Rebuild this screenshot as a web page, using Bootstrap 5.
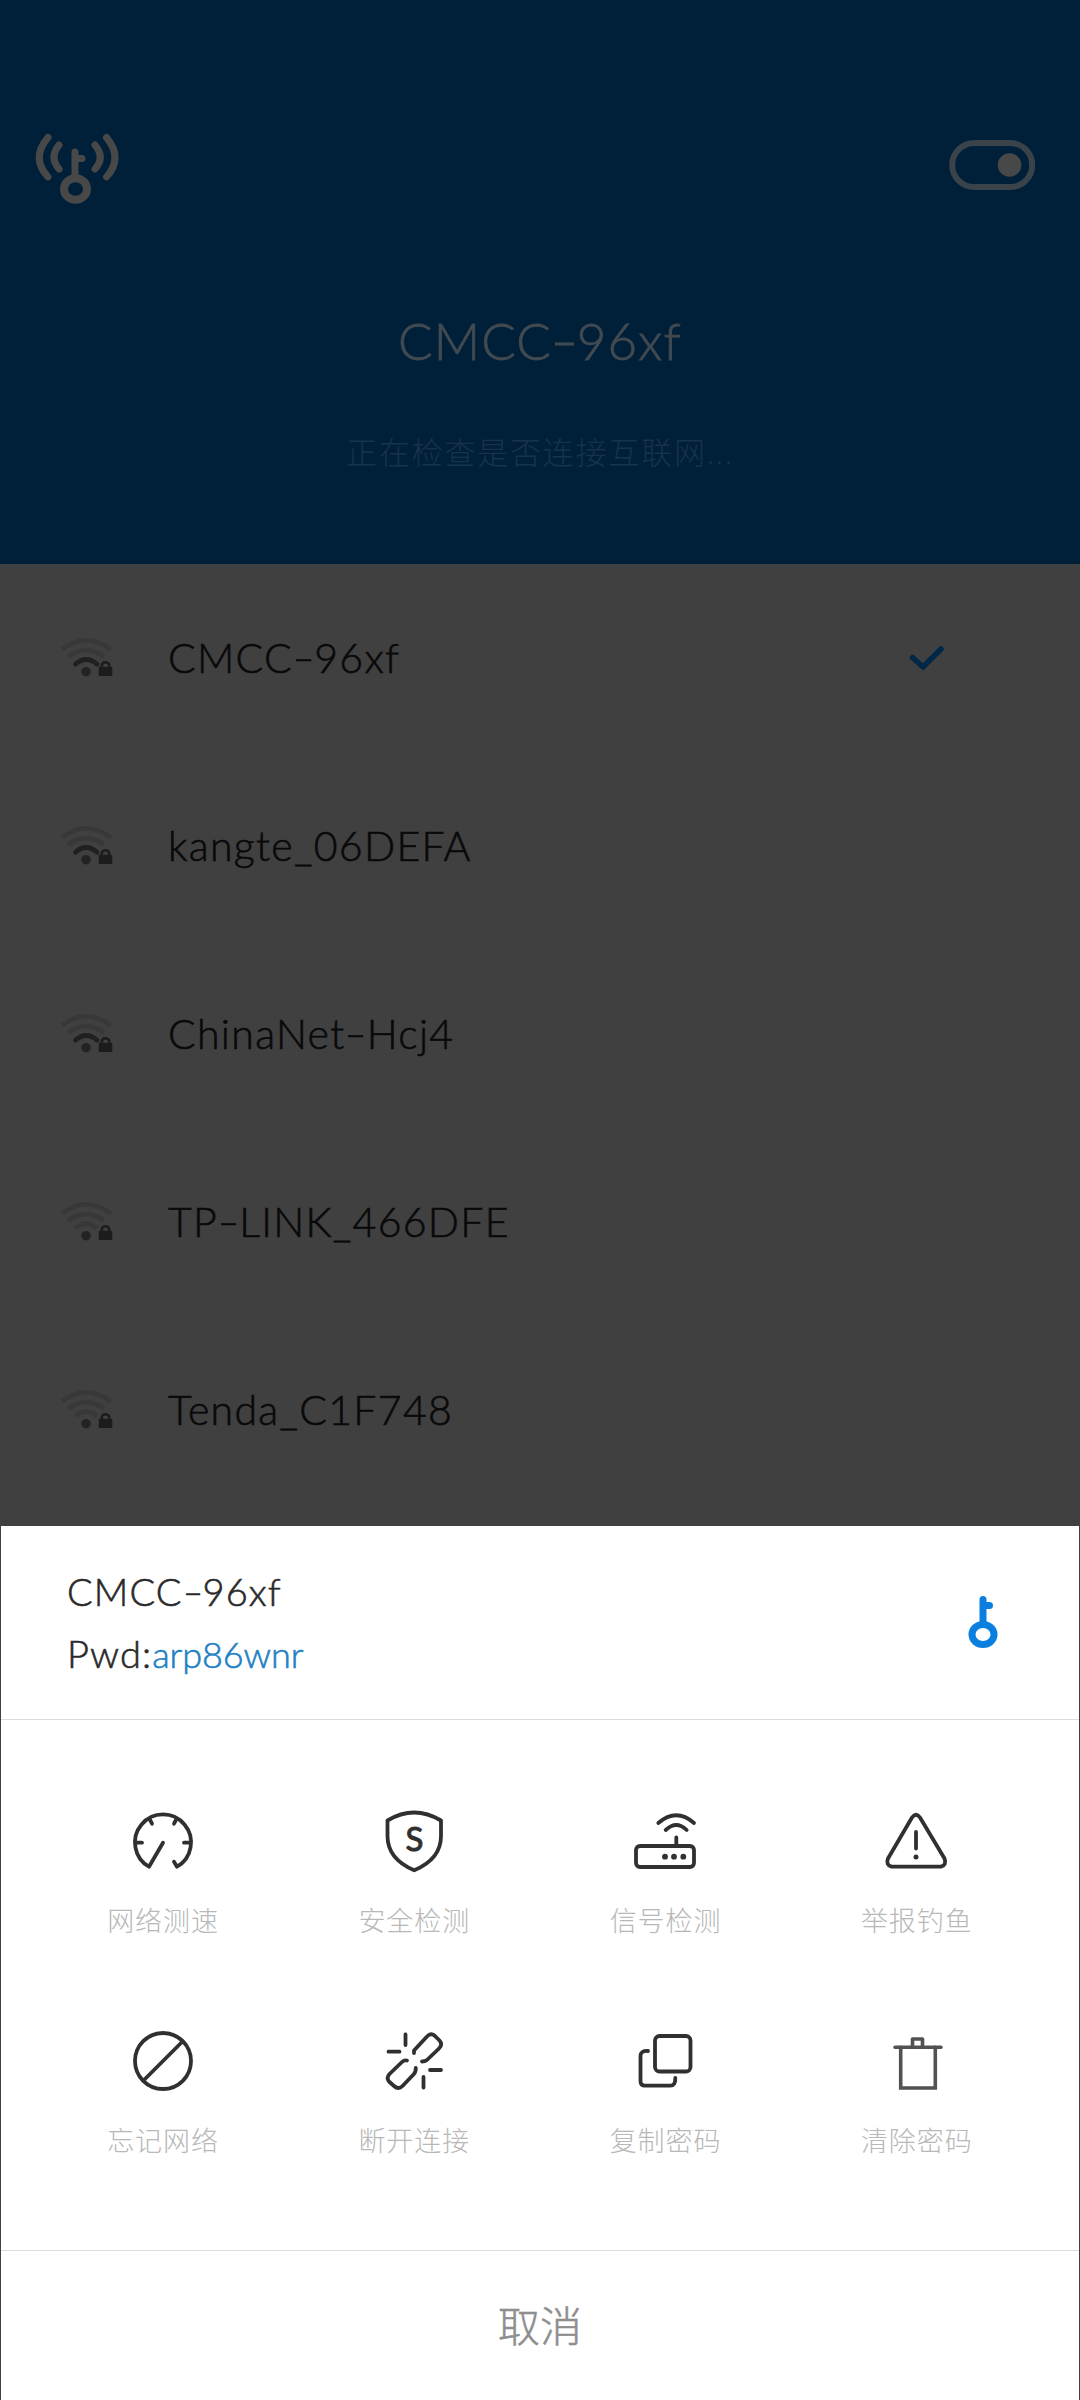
<!DOCTYPE html>
<html lang="zh-CN">
<head>
  <meta charset="UTF-8">
  <meta name="viewport" content="width=device-width, initial-scale=1.0">
  <title>WiFi</title>
  <link href="https://cdn.jsdelivr.net/npm/bootstrap@5.3.0/dist/css/bootstrap.min.css" rel="stylesheet">
  <style>
    body {
      background-color: #404040;
      font-family: Lato, "Noto Sans CJK SC", sans-serif;
      font-weight: 300;
    }
    .screen {
      height: 2400px;
    }
    .top-panel {
      height: 564px;
      background-color: #00203a;
      color: #424a51;
    }
    .top-bar {
      height: 238px;
      padding: 127px 43px 0 34px;
    }
    .current-name {
      margin-top: 70px;
      font-size: 51px;
      line-height: 66px;
      letter-spacing: 1.2px;
      -webkit-text-stroke: .8px currentColor;
    }
    .current-state {
      margin-top: 55px;
      font-size: 31px;
      line-height: 46px;
      letter-spacing: 1.8px;
      color: #18324a;
    }
    .wide-dash {
      display: inline-block;
      margin: 0 3px;
      letter-spacing: 0;
      transform: translateY(-1px) scaleX(1.5);
    }
    .wifi-row {
      height: 188px;
      padding: 0 135px 2px 58px;
      color: #090909;
    }
    .wifi-name {
      margin-left: 50px;
      padding-top: 2px;
      font-size: 41px;
      letter-spacing: 1.3px;
      -webkit-text-stroke: .6px currentColor;
    }
    .sheet {
      height: 874px;
      margin: 0 1px;
      color: #2a2a2a;
    }
    .sheet-head {
      height: 194px;
      padding: 0 79px 1px 66px;
      border-bottom: 1px solid #dcdcdc;
    }
    .sheet-name {
      font-size: 38px;
      line-height: 62px;
      letter-spacing: 1.1px;
      -webkit-text-stroke: .6px currentColor;
    }
    .pwd {
      color: #2380c4;
      font-size: 36px;
      letter-spacing: -.1px;
    }
    .tools {
      height: 531px;
      padding: 80px 36.5px 0;
      border-bottom: 1px solid #dcdcdc;
    }
    .tool {
      height: 220px;
      color: #b8b8b8;
      font-size: 27px;
      line-height: 40px;
      letter-spacing: 1px;
    }
    .tool svg {
      display: block;
      margin: 0 auto 21px;
    }
    .line-icon {
      fill: none;
      stroke: #303030;
      stroke-width: 3.8;
      stroke-linecap: round;
      stroke-linejoin: round;
    }
    .line-icon .solid {
      fill: #303030;
      stroke: none;
    }
    .line-icon .letter {
      fill: #303030;
      stroke-width: 1;
      letter-spacing: 0;
    }
    .bin-icon {
      stroke: #525252;
      stroke-width: 3.6;
    }
    .cancel {
      padding-top: 2px;
      font-size: 42px;
      color: #8e8e8e;
      -webkit-text-stroke: .5px currentColor;
    }
  </style>
</head>
<body>

<!-- wifi signal symbols -->
<svg width="0" height="0" class="d-none">
  <symbol id="wifiBase" viewBox="0 0 60 56">
    <g fill="none" stroke="#383838" stroke-width="4.6">
      <path d="M4 20.5Q28 2 53 20.5"/>
      <path d="M10 27.8Q28 14.5 46 27.8"/>
    </g>
    <circle cx="28" cy="42.7" r="4.8" fill="#232323"/>
    <path d="M40.8 37.7h1.7v-.8a5 5 0 0 1 10 0v.8h1.8V47H40.8zM45 37.7h5v-.8a2.5 2.5 0 0 0-5 0z" fill="#1c1c1c" fill-rule="evenodd"/>
  </symbol>
  <symbol id="wifiMid" viewBox="0 0 60 56">
    <use href="#wifiBase"/>
    <path d="M17.5 35.2Q28 26 39 35.2" fill="none" stroke="#202020" stroke-width="4.8" stroke-linecap="round"/>
  </symbol>
  <symbol id="wifiLow" viewBox="0 0 60 56">
    <use href="#wifiBase"/>
    <path d="M17.5 35.2Q28 26 39 35.2" fill="none" stroke="#383838" stroke-width="4.6"/>
  </symbol>
</svg>

<div class="screen d-flex flex-column overflow-hidden">
  <header class="top-panel flex-shrink-0 text-center">
    <div class="top-bar d-flex justify-content-between align-items-start">
      <svg width="88" height="84" viewBox="0 0 88 84" fill="none" stroke="#484848" stroke-width="7" stroke-linecap="round">
        <path d="M14 10.5Q-3.5 31 14 50"/>
        <path d="M25 18Q15 30.5 25 42"/>
        <path d="M61 18Q71.5 30.5 61 42"/>
        <path d="M72.5 10.5Q89.5 31 72.5 50"/>
        <path d="M41 25V49M41 31.5H48"/>
        <ellipse cx="41.5" cy="62" rx="11.5" ry="10.8" stroke-width="8"/>
      </svg>
      <svg width="88" height="76" viewBox="0 0 88 76">
        <rect x="3.2" y="16" width="80" height="44" rx="22" fill="none" stroke="#3a424a" stroke-width="6"/>
        <circle cx="60.5" cy="38" r="11.8" fill="#484848"/>
      </svg>
    </div>
    <div class="current-name">CMCC<span class="wide-dash">-</span>96xf</div>
    <div class="current-state">正在检查是否连接互联网...</div>
  </header>

  <main class="flex-grow-1 overflow-hidden">
    <div class="wifi-row d-flex align-items-center">
      <svg width="60" height="56"><use href="#wifiMid"/></svg>
      <span class="wifi-name">CMCC<span class="wide-dash">-</span>96xf</span>
      <svg class="ms-auto" width="38" height="32" viewBox="0 0 38 32"><path d="M5.5 16.5L16 26 34 8" fill="none" stroke="#002747" stroke-width="5.5" stroke-linecap="round" stroke-linejoin="round"/></svg>
    </div>
    <div class="wifi-row d-flex align-items-center">
      <svg width="60" height="56"><use href="#wifiMid"/></svg>
      <span class="wifi-name">kangte_06DEFA</span>
    </div>
    <div class="wifi-row d-flex align-items-center">
      <svg width="60" height="56"><use href="#wifiMid"/></svg>
      <span class="wifi-name">ChinaNet<span class="wide-dash">-</span>Hcj4</span>
    </div>
    <div class="wifi-row d-flex align-items-center">
      <svg width="60" height="56"><use href="#wifiLow"/></svg>
      <span class="wifi-name">TP<span class="wide-dash">-</span>LINK_466DFE</span>
    </div>
    <div class="wifi-row d-flex align-items-center">
      <svg width="60" height="56"><use href="#wifiLow"/></svg>
      <span class="wifi-name">Tenda_C1F748</span>
    </div>
  </main>

  <section class="sheet bg-white flex-shrink-0 d-flex flex-column">
    <div class="sheet-head d-flex align-items-center justify-content-between">
      <div class="sheet-name">
        <div>CMCC<span class="wide-dash">-</span>96xf</div>
        <div>Pwd:<span class="pwd">arp86wnr</span></div>
      </div>
      <svg width="34" height="56" viewBox="0 0 34 56" fill="none" stroke="#0a7fe0" stroke-width="7" stroke-linecap="round">
        <path d="M17 5.5V28M17 11.5H23.5"/>
        <ellipse cx="17" cy="40.5" rx="11" ry="10"/>
      </svg>
    </div>

    <div class="tools">
      <div class="row row-cols-4 g-0 text-center">
        <div class="col tool">
          <svg class="line-icon" width="80" height="80" viewBox="0 0 80 80">
            <path d="M40 42.7L26 66.7A28 28 0 1 1 54 66.700L51 61.7"/>
            <path d="M12.5 42.7H19M61 42.7h6.5M26.5 19l2.5 4.7M53.5 19L51 23.7"/>
          </svg>
          网络测速
        </div>
        <div class="col tool">
          <svg class="line-icon" width="80" height="80" viewBox="0 0 80 80">
            <path d="M13.5 20.5Q40 4.5 67 20.5V36Q67 59 40.2 70.3 13.5 59 13.5 36Z"/>
            <text class="letter" x="40.5" y="50.5" font-size="33" font-weight="400" text-anchor="middle">S</text>
          </svg>
          安全检测
        </div>
        <div class="col tool">
          <svg class="line-icon" width="80" height="80" viewBox="1.5 0 80 80">
            <rect x="11.500" y="46" width="58" height="21" rx="4"/>
            <path d="M51.8 37.5V46M41.2 30Q51.800 20 62.2 30M33.8 23Q51.8 7.5 69.5 23"/>
            <g class="solid"><circle cx="40.5" cy="56.7" r="2.9"/><circle cx="49.5" cy="56.7" r="2.9"/><circle cx="58.8" cy="56.7" r="2.9"/></g>
          </svg>
          信号检测
        </div>
        <div class="col tool">
          <svg class="line-icon" width="80" height="80" viewBox="1 0 80 80">
            <path d="M36 17.5Q40 12 44 17.5L68.5 58.5Q71 65 65 66.7H15.5Q9.5 65 12 58.5ZM40 32V48.5"/>
            <circle class="solid" cx="40" cy="57" r="2.5"/>
          </svg>
          举报钓鱼
        </div>
        <div class="col tool">
          <svg class="line-icon" width="80" height="80" viewBox="0 0 80 80">
            <circle cx="40" cy="41" r="28"/>
            <path d="M59.5 21.5L20.5 60.5"/>
          </svg>
          忘记网络
        </div>
        <div class="col tool">
          <svg class="line-icon" width="80" height="80" viewBox="0 0 80 80">
            <path d="M40 33V30.5L53 16.5Q57 12.5 61 16L65.5 20.5Q69 24.5 65 28.5L53 40Q51 41.5 48 41.5"/>
            <path d="M33 40.5Q30 40 28 42L15.5 54Q12 58 15 61.5L20 66Q24.5 70 28.5 66L39.5 54.5Q42 52 41.8 48"/>
            <path d="M31.5 14.5V25M14.5 31.7H25.5M56 50H67M49.5 57V67.5"/>
          </svg>
          断开连接
        </div>
        <div class="col tool">
          <svg class="line-icon" width="80" height="80" viewBox="1.5 0 80 80">
            <rect x="30.5" y="16" width="35.5" height="35.5" rx="4.5"/>
            <path d="M23.5 31Q16 30.5 16 36V61Q16 65.7 20.5 65.7H46Q51 65.7 50.8 58"/>
          </svg>
          复制密码
        </div>
        <div class="col tool">
          <svg class="line-icon bin-icon" width="80" height="80" viewBox="1 0 80 80">
            <path d="M19 27.3H65M36.5 27V19H46.5V27"/>
            <path d="M24.7 27.3V68H59.3V27.3" stroke-linejoin="miter"/>
          </svg>
          清除密码
        </div>
      </div>
    </div>

    <div class="cancel flex-grow-1 d-flex align-items-center justify-content-center">取消</div>
  </section>
</div>

<script src="https://cdn.jsdelivr.net/npm/bootstrap@5.3.0/dist/js/bootstrap.bundle.min.js"></script>
</body>
</html>
